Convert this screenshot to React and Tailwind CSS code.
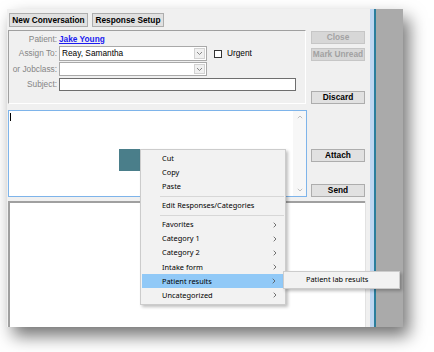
import React from 'react';

const menuGroups = [
  ['Cut', 'Copy', 'Paste'],
  ['Edit Responses/Categories'],
  ['Favorites', 'Category 1', 'Category 2', 'Intake form', 'Patient results', 'Uncategorized'],
];
const withArrow = ['Favorites', 'Category 1', 'Category 2', 'Intake form', 'Patient results', 'Uncategorized'];

function Btn({ children, className = '', disabled }) {
  return (
    <div
      className={`flex items-center justify-center border text-[8.3px] font-bold leading-none ${
        disabled ? 'border-[#c6c6c6] bg-[#d7d7d7] text-[#a2a2a2]' : 'border-[#adadad] bg-[#e1e1e1] text-black'
      } ${className}`}
    >
      {children}
    </div>
  );
}

function Chevron() {
  return (
    <svg width="7" height="5" viewBox="0 0 7 5">
      <path d="M1 1 L3.5 3.5 L6 1" fill="none" stroke="#7a7a7a" strokeWidth="0.9" />
    </svg>
  );
}

function Combo({ value, className = '' }) {
  return (
    <div className={`flex w-[148px] border border-[#a9a9a9] bg-white ${className}`}>
      <div className="flex flex-1 items-center pl-[2px] text-[8.3px] text-black">{value}</div>
      <div className="m-[1px] flex w-[11px] items-center justify-center border border-[#d2d2d2] bg-[#f0f0f0]">
        <Chevron />
      </div>
    </div>
  );
}

function Label({ children }) {
  return <div className="w-[48px] shrink-0 whitespace-nowrap text-right text-[8.3px] text-[#858585]">{children}</div>;
}

function MenuArrow() {
  return (
    <svg width="4" height="6" viewBox="0 0 4 6" className="absolute right-[7px] top-[4px]">
      <path d="M0.7 0.7 L3 3 L0.7 5.3" fill="none" stroke="#505050" strokeWidth="0.8" />
    </svg>
  );
}

export default function App() {
  return (
    <div className="relative h-[352px] w-[434px] overflow-hidden bg-white pl-[7px] pt-[9px] font-['Liberation_Sans',Arial,sans-serif]">
      <div className="flex h-[318px] w-[396px] shadow-[6px_9px_16px_rgba(0,0,0,0.55)]">
        <div className="flex w-[363px] flex-col bg-[#f0f0f0]">
          <div className="flex gap-[4px] pl-[2px] pt-[4px]">
            <Btn className="h-[14px] w-[79px]">New Conversation</Btn>
            <Btn className="h-[14px] w-[72px]">Response Setup</Btn>
          </div>

          <div className="mt-[3px] flex pl-[1px]">
            <div className="h-[74px] w-[298px] border border-b-white border-l-[#a0a0a0] border-r-white border-t-[#a0a0a0] bg-[#f0f0f0]">
              <div className="mt-[1px] flex h-[14px] items-center gap-[2px]">
                <Label>Patient:</Label>
                <span className="text-[8.3px] font-bold text-[#1c1cf0] underline">Jake Young</span>
              </div>
              <div className="flex h-[15px] items-center gap-[2px]">
                <Label>Assign To:</Label>
                <Combo value="Reay, Samantha" className="h-[15px]" />
                <div className="ml-[5px] h-[8px] w-[8px] border border-[#333] bg-white" />
                <span className="ml-[3px] text-[8.3px] text-black">Urgent</span>
              </div>
              <div className="mt-[1px] flex h-[14px] items-center gap-[2px]">
                <Label>or Jobclass:</Label>
                <Combo value="" className="h-[14px]" />
              </div>
              <div className="mt-[2px] flex h-[13px] items-center gap-[2px]">
                <Label>Subject:</Label>
                <div className="h-[13px] w-[237px] border border-[#6e6e6e] bg-white" />
              </div>
            </div>
            <div className="ml-[5px] flex h-[74px] w-[54px] flex-col pt-[1px]">
              <Btn disabled className="h-[13px]">Close</Btn>
              <Btn disabled className="mt-[4px] h-[13px]">Mark Unread</Btn>
              <Btn className="mt-auto h-[13px]">Discard</Btn>
            </div>
          </div>

          <div className="mt-[6px] flex pl-[1px]">
            <div className="relative flex h-[87px] w-[299px] border border-[#7eb4ea] bg-white">
              <div className="ml-[1px] mt-[2px] h-[8px] w-[1px] bg-black" />
              <div className="ml-auto flex w-[13px] flex-col items-center justify-between bg-[#f7f7f7] py-[4px]">
                <svg width="6" height="4" viewBox="0 0 6 4">
                  <path d="M0.8 3.2 L3 1 L5.2 3.2" fill="none" stroke="#b0b0b0" strokeWidth="0.8" />
                </svg>
                <svg width="6" height="4" viewBox="0 0 6 4">
                  <path d="M0.8 0.8 L3 3 L5.2 0.8" fill="none" stroke="#b0b0b0" strokeWidth="0.8" />
                </svg>
              </div>
            </div>
            <div className="ml-[4px] flex h-[87px] w-[54px] flex-col">
              <Btn className="mt-[39px] h-[13px]">Attach</Btn>
              <Btn className="mt-auto h-[13px]">Send</Btn>
            </div>
          </div>

          <div className="mt-[4px] flex flex-1 pl-[1px]">
            <div className="w-[357px] border-l-2 border-t-2 border-[#a0a0a0] bg-white" />
            <div className="w-[1px] bg-[#e2e2e2]" />
          </div>
        </div>
        <div className="w-[4px] bg-[#bdd6f1]" />
        <div className="w-[2px] bg-[#2b7e9c]" />
        <div className="flex-1 bg-[#aaaaaa]" />
      </div>

      <div className="absolute left-[119px] top-[149px] h-[22px] w-[21px] bg-[#4a7e8a]" />

      <div className="absolute left-[140px] top-[149px] w-[146px] border border-[#cccccc] bg-[#f2f2f2] pb-[1px] pt-[1px] font-['Noto_Sans',sans-serif] text-[7.4px] text-black shadow-[2px_2px_3px_rgba(0,0,0,0.25)]">
        {menuGroups.map((group, gi) => (
          <div key={gi}>
            {gi > 0 ? (
              <div className={`flex items-center pl-[19px] pr-[1px] ${gi === 1 ? 'h-[5.4px]' : 'h-[4.4px]'}`}>
                <div className="h-[1px] w-full bg-[#d7d7d7]" />
              </div>
            ) : null}
            {group.map((item) => (
              <div
                key={item}
                className={`relative mx-[1px] flex h-[14.2px] items-center pl-[20px] ${
                  item === 'Patient results' ? 'mr-[2px] bg-[#91c9f7]' : ''
                }`}
              >
                {item}
                {withArrow.includes(item) ? <MenuArrow /> : null}
              </div>
            ))}
          </div>
        ))}
      </div>

      <div className="absolute left-[283px] top-[271px] flex h-[18px] w-[117px] items-center border border-[#cccccc] bg-[#f2f2f2] pl-[22px] font-['Noto_Sans',sans-serif] text-[7.4px] text-black shadow-[2px_2px_3px_rgba(0,0,0,0.25)]">
        Patient lab results
      </div>
    </div>
  );
}
